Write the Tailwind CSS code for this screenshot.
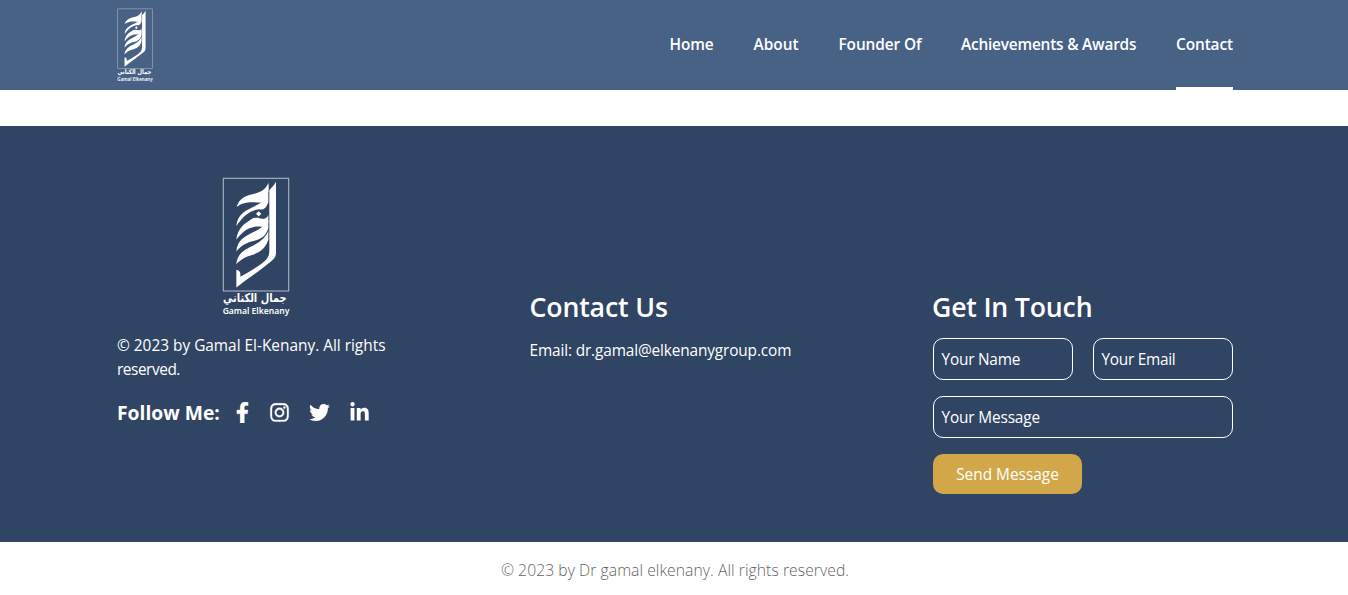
<!DOCTYPE html>
<html lang="en">
<head>
<meta charset="utf-8">
<title>Gamal Elkenany - Contact</title>
<script src="https://cdn.jsdelivr.net/npm/@tailwindcss/browser@4"></script>
</head>
<body class="bg-white font-['Open_Sans','Noto_Sans',sans-serif] text-[15.4px] leading-6 text-white overflow-hidden">
<svg class="hidden">
  <symbol id="logo" viewBox="36 23 204 422">
    <rect x="40" y="26.500" width="196" height="338" fill="none" stroke="#a4afbe" stroke-width="3.500"/>
    <g fill="#fff">
      <path d="M178 62C186 54 193 46 198 37V250C198 264 190 270 178 280C146 306 112 328 79 354V301C85 302 91 306 91 313V322C112 310 132 299 150 286C168 273 178 264 178 244Z"/>
      <path d="M80 112C88 84 112 77 136 72C160 66 170 54 175 40C180 72 170 98 150 99C126 98 104 94 80 112Z"/>
      <path d="M79 170C82 136 104 125 126 114C150 104 166 90 175 72V98C168 118 158 122 146 119C122 122 98 140 79 170Z"/>
      <path d="M146 125L154 133L146 141L138 133Z"/>
      <path d="M79 211C82 176 104 162 124 149C136 141 148 146 157 148C166 149 172 144 175 136V158C160 180 150 168 134 172C112 176 94 190 79 211Z"/>
      <path d="M79 246C82 212 104 202 126 190C152 178 166 166 175 152V177C164 208 144 210 124 216C104 222 92 230 79 246Z"/>
      <path d="M79 284C82 250 106 240 130 228C154 216 168 202 175 184V211C164 242 146 250 124 257C104 263 92 270 79 284Z"/>
      <text x="39" y="397" textLength="191" lengthAdjust="spacingAndGlyphs" font-family="DejaVu Sans, sans-serif" font-weight="700" font-size="37">جمال الكناني</text>
      <text x="38" y="433" textLength="200" lengthAdjust="spacingAndGlyphs" font-family="Noto Sans, sans-serif" font-weight="600" font-size="25">Gamal Elkenany</text>
    </g>
  </symbol>
</svg>

<header class="h-[90px] bg-[#486286] pl-[116.500px] pr-[115px] flex items-center justify-between">
  <svg class="w-9 h-[75px] mt-px" preserveAspectRatio="none"><use href="#logo"/></svg>
  <nav class="h-full flex gap-10 font-semibold whitespace-nowrap">
    <a class="w-11 flex items-center tracking-[-0.1px]">Home</a>
    <a class="w-[45px] flex items-center">About</a>
    <a class="w-[82.500px] flex items-center tracking-[-0.1px]">Founder Of</a>
    <a class="w-[175px] flex items-center tracking-[-0.2px]">Achievements &amp; Awards</a>
    <a class="w-[57px] flex items-center tracking-[-0.1px] border-b-3 border-white pt-[3px]">Contact</a>
  </nav>
</header>

<footer class="mt-9 h-[416px] bg-[#304564] pl-[117px] pr-[115px] pt-[51px] flex justify-between items-start whitespace-nowrap">
  <section class="w-[278px]">
    <svg class="block mx-auto w-[68px] h-[141px]"><use href="#logo"/></svg>
    <p class="mt-4">© 2023 by Gamal El-Kenany. All rights<br><span class="tracking-[-0.45px]">reserved.</span></p>
    <div class="mt-[19px] h-6 flex items-center">
      <h3 class="w-[115px] text-[19.3px] font-bold">Follow Me:</h3>
      <div class="flex items-center gap-4 -mt-px">
        <svg class="w-[21px] h-[21px]" viewBox="-96 0 512 512" fill="#fff" stroke="#fff" stroke-width="8"><path d="M279.140 288l14.220-92.660h-88.910v-60.130c0-25.350 12.420-50.060 52.240-50.060h40.420V6.260S260.430 0 225.360 0c-73.220 0-121.080 44.380-121.080 124.720v70.620H22.890V288h81.390v224h100.170V288z"/></svg>
        <svg class="w-[21px] h-[21px]" viewBox="-32 0 512 512" fill="#fff" stroke="#fff" stroke-width="8"><path d="M224.100 141c-63.600 0-114.900 51.300-114.900 114.900s51.300 114.900 114.900 114.900S339 319.500 339 255.900 287.700 141 224.100 141zm0 189.600c-41.100 0-74.700-33.500-74.700-74.700s33.500-74.700 74.700-74.700 74.700 33.500 74.700 74.700-33.600 74.700-74.700 74.700zm146.400-194.300c0 14.900-12 26.800-26.800 26.800-14.900 0-26.800-12-26.800-26.800s12-26.800 26.800-26.800 26.800 12 26.800 26.800zm76.100 27.200c-1.700-35.900-9.900-67.700-36.200-93.900-26.200-26.200-58-34.400-93.900-36.200-37-2.100-147.900-2.100-184.900 0-35.800 1.700-67.600 9.900-93.900 36.100s-34.400 58-36.200 93.900c-2.100 37-2.100 147.900 0 184.900 1.700 35.900 9.900 67.700 36.200 93.900s58 34.400 93.900 36.200c37 2.100 147.900 2.100 184.900 0 35.900-1.700 67.700-9.900 93.900-36.200 26.200-26.200 34.400-58 36.200-93.900 2.100-37 2.100-147.800 0-184.800zM398.800 388c-7.800 19.600-22.900 34.700-42.600 42.600-29.500 11.700-99.500 9-132.100 9s-102.700 2.600-132.100-9c-19.600-7.800-34.700-22.900-42.600-42.600-11.700-29.500-9-99.500-9-132.100s-2.600-102.700 9-132.100c7.800-19.600 22.900-34.700 42.600-42.600 29.500-11.700 99.500-9 132.100-9s102.700-2.600 132.100 9c19.600 7.800 34.700 22.900 42.600 42.600 11.700 29.500 9 99.500 9 132.100s2.700 102.700-9 132.100z"/></svg>
        <svg class="ml-[3px] w-[21px] h-[21px]" viewBox="0 0 512 512" fill="#fff"><path d="M459.370 151.716c.325 4.548.325 9.097.325 13.645 0 138.720-105.583 298.558-298.558 298.558-59.452 0-114.680-17.219-161.137-47.106 8.447.974 16.568 1.299 25.340 1.299 49.055 0 94.213-16.568 130.274-44.832-46.132-.975-84.792-31.188-98.112-72.772 6.498.974 12.995 1.624 19.818 1.624 9.421 0 18.843-1.300 27.614-3.573-48.081-9.747-84.143-51.980-84.143-102.985v-1.299c13.969 7.797 30.214 12.670 47.431 13.319-28.264-18.843-46.781-51.005-46.781-87.391 0-19.492 5.197-37.360 14.294-52.954 51.655 63.675 129.300 105.258 216.365 109.807-1.624-7.797-2.599-15.918-2.599-24.040 0-57.828 46.782-104.934 104.934-104.934 30.213 0 57.502 12.670 76.670 33.137 23.715-4.548 46.456-13.320 66.599-25.340-7.798 24.366-24.366 44.833-46.132 57.827 21.117-2.273 41.584-8.122 60.426-16.243-14.292 20.791-32.161 39.308-52.628 54.253z"/></svg>
        <svg class="ml-[3px] w-[21px] h-[21px]" viewBox="-32 0 512 512" fill="#fff"><path d="M100.280 448H7.400V148.900h92.880zM53.790 108.100C24.090 108.100 0 83.500 0 53.800a53.790 53.790 0 0 1 107.580 0c0 29.700-24.100 54.300-53.790 54.300zM447.900 448h-92.680V302.400c0-34.700-.7-79.200-48.290-79.200-48.290 0-55.690 37.700-55.690 76.700V448h-92.780V148.900h89.080v40.800h1.300c12.400-23.500 42.690-48.300 87.880-48.300 94 0 111.280 61.900 111.280 142.300V448z"/></svg>
      </div>
    </div>
  </section>
  <section class="w-[269px] pt-[113px]">
    <h2 class="text-[26.700px] leading-[34px] font-semibold tracking-[-0.15px]">Contact Us</h2>
    <p class="mt-[15px] tracking-[-0.14px]">Email: dr.gamal@elkenanygroup.com</p>
  </section>
  <section class="w-[300px] pt-[113px]">
    <h2 class="-ml-px text-[26.700px] leading-[34px] font-semibold tracking-[-0.2px]">Get In Touch</h2>
    <form class="mt-[14px]">
      <div class="flex gap-5">
        <div class="w-[140px] h-[42px] border border-white rounded-[10px] px-[7.500px] pt-0.5 flex items-center tracking-[-0.22px]">Your Name</div>
        <div class="w-[140px] h-[42px] border border-white rounded-[10px] px-[7.500px] pt-0.5 flex items-center tracking-[-0.28px]">Your Email</div>
      </div>
      <div class="mt-4 h-[42px] border border-white rounded-[10px] px-[7.500px] pt-0.5 flex items-center tracking-[-0.16px]">Your Message</div>
      <button type="button" class="mt-4 w-[149px] h-10 pt-0.5 rounded-[10px] bg-[#d1a74a] block">Send Message</button>
    </form>
  </section>
</footer>
<p class="mt-4 text-center text-[15.700px] font-light text-[#636363] tracking-[0.06px] pl-[2px]">© 2023 by Dr gamal elkenany. All rights reserved.</p>
</body>
</html>
